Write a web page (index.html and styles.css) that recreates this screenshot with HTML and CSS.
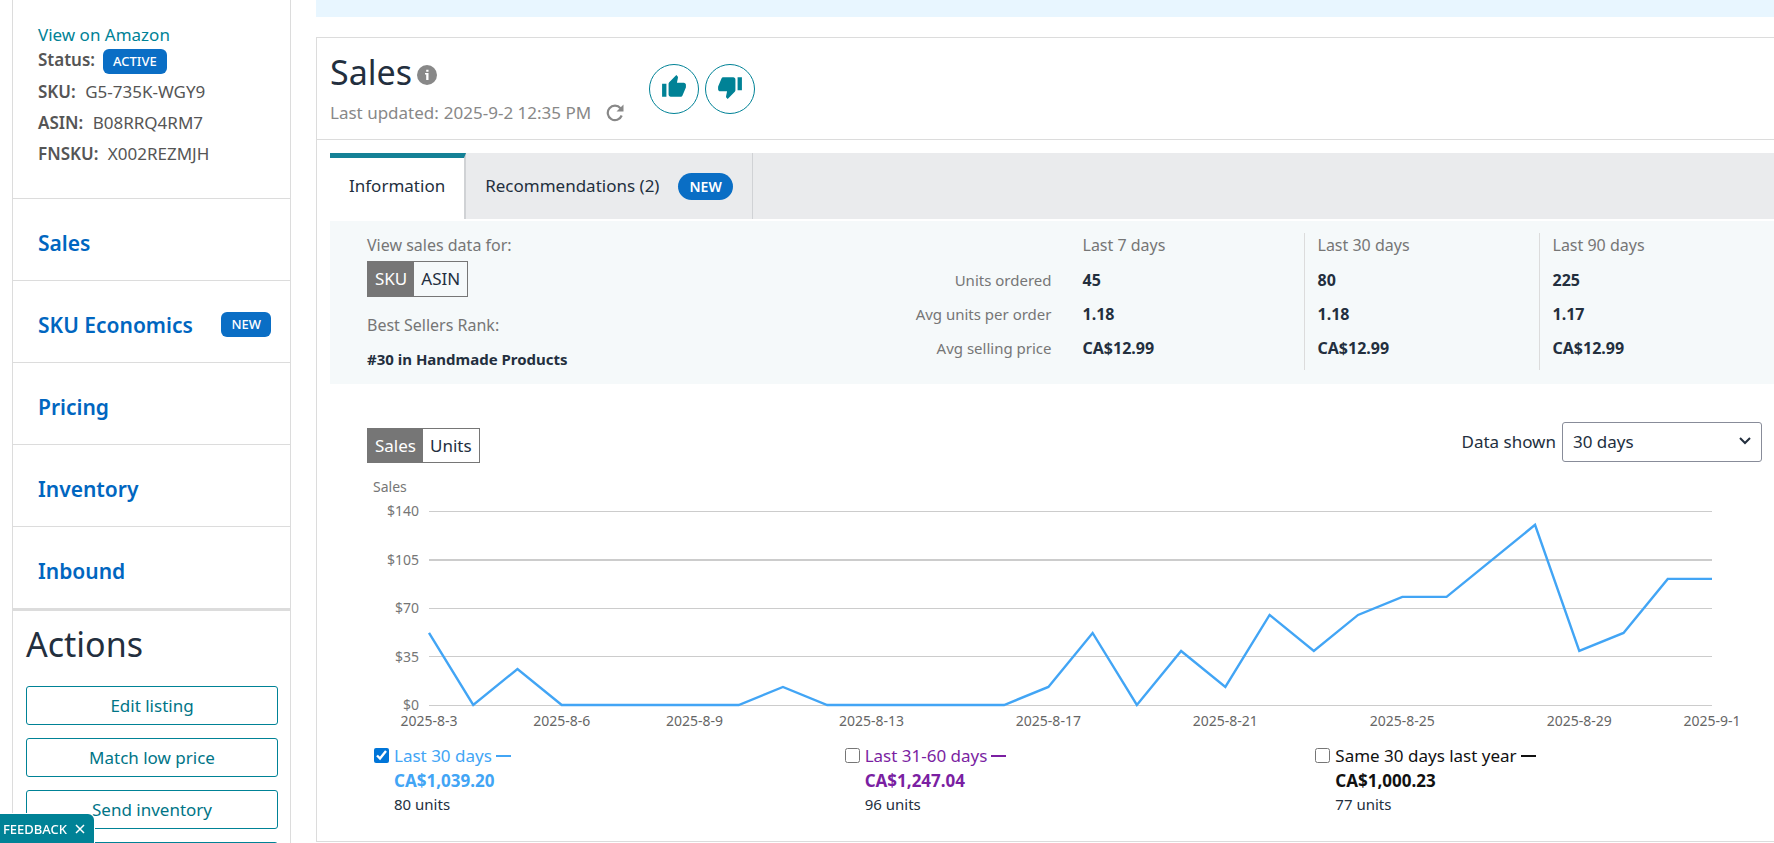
FILE: index.html
```html
<!DOCTYPE html>
<html lang="en">
  <head>
    <meta charset="UTF-8">
    <title>Sales</title>
    <link rel="stylesheet" href="styles.css">
  </head>
  <body>
    <aside class="sidebar">
      <div class="product">
        <a class="product-link" href="#">View on Amazon</a>
        <div class="product-status"><b>Status:</b> <span class="badge">ACTIVE</span></div>
        <div class="product-row"><b>SKU:</b> G5-735K-WGY9</div>
        <div class="product-row"><b>ASIN:</b> B08RRQ4RM7</div>
        <div class="product-row"><b>FNSKU:</b> X002REZMJH</div>
      </div>
      <nav class="menu">
        <a href="#">Sales</a>
        <a href="#">SKU Economics <span class="badge">NEW</span></a>
        <a href="#">Pricing</a>
        <a href="#">Inventory</a>
        <a href="#">Inbound</a>
      </nav>
      <div class="actions">
        <h2>Actions</h2>
        <button type="button">Edit listing</button>
        <button type="button">Match low price</button>
        <button type="button">Send inventory</button>
        <button type="button"></button>
      </div>
    </aside>

    <main class="main">
      <div class="notice"></div>
      <section class="panel">
        <header class="panel-header">
          <div>
            <h1>Sales
              <svg class="info" viewBox="0 0 20 20" width="20" height="20">
                <circle cx="10" cy="10" r="10" fill="#888"/>
                <path d="M8 8h3.500v7h-2.300v-5.500H8zM9.200 4.800h2.300v2H9.200z" fill="#fff"/>
              </svg>
            </h1>
            <p class="updated">Last updated: <span>2025-9-2 12:35 PM</span>
              <svg viewBox="0 0 18 18" width="18" height="18" fill="none" stroke="#888" stroke-width="2.200">
                <path d="M15.700 11.500A7.200 7.200 0 1 1 14.500 4.300"/>
                <path d="M17.500 0.500v7h-7z" fill="#888" stroke="none"/>
              </svg>
            </p>
          </div>
          <div class="votes">
            <button type="button" aria-label="Helpful">
              <svg viewBox="0 0 24 24" width="26" height="26"><path d="M1 21h4V9H1v12zm22-11c0-1.100-.9-2-2-2h-6.310l.95-4.570.03-.32c0-.41-.17-.79-.44-1.060L14.170 1 7.590 7.590C7.220 7.950 7 8.450 7 9v10c0 1.100.9 2 2 2h9c.83 0 1.540-.5 1.840-1.220l3.020-7.050c.09-.23.14-.47.14-.73v-2z"/></svg>
            </button>
            <button type="button" aria-label="Not helpful">
              <svg viewBox="0 0 24 24" width="26" height="26"><path d="M15 3H6c-.83 0-1.540.5-1.840 1.220l-3.020 7.050c-.09.23-.14.47-.14.73v2c0 1.100.9 2 2 2h6.310l-.95 4.570-.03.32c0 .41.17.79.44 1.060L9.830 23l6.590-6.590c.36-.36.58-.86.58-1.410V5c0-1.100-.9-2-2-2zm4 0v12h4V3h-4z"/></svg>
            </button>
          </div>
        </header>

        <div class="tabs">
          <button type="button" class="tab tab-active">Information</button>
          <button type="button" class="tab">Recommendations (2) <span class="pill">NEW</span></button>
        </div>

        <div class="summary">
          <div class="summary-left">
            <p>View sales data for:</p>
            <div class="toggle">
              <button type="button" class="on">SKU</button><button type="button">ASIN</button>
            </div>
            <p class="rank-label">Best Sellers Rank:</p>
            <p class="rank">#30 in Handmade Products</p>
          </div>
          <table class="stats">
            <thead>
              <tr><td></td><th>Last 7 days</th><th>Last 30 days</th><th>Last 90 days</th></tr>
            </thead>
            <tbody>
              <tr><th>Units ordered</th><td>45</td><td>80</td><td>225</td></tr>
              <tr><th>Avg units per order</th><td>1.18</td><td>1.18</td><td>1.17</td></tr>
              <tr><th>Avg selling price</th><td>CA$12.99</td><td>CA$12.99</td><td>CA$12.99</td></tr>
            </tbody>
          </table>
        </div>

        <div class="toolbar">
          <div class="toggle">
            <button type="button" class="on">Sales</button><button type="button">Units</button>
          </div>
          <div class="range">
            <label for="range">Data shown</label>
            <div class="select">
              <select id="range">
                <option>30 days</option>
              </select>
              <svg viewBox="0 0 12 8" width="12" height="8"><path d="M1 1l5 5 5-5" fill="none" stroke="#232f3e" stroke-width="2"/></svg>
            </div>
          </div>
        </div>

        <div class="chart">
          <div class="chart-title">Sales</div>
          <div class="chart-body">
            <div class="y-axis">
              <span>$140</span><span>$105</span><span>$70</span><span>$35</span><span>$0</span>
            </div>
            <div class="plot">
              <!-- one unit per day across, one unit per dollar down -->
              <svg viewBox="0 0 29 140" preserveAspectRatio="none">
                <g class="grid">
                  <path d="M0 0H29"/>
                  <path class="thick" d="M0 35H29"/>
                  <path d="M0 70H29"/>
                  <path d="M0 105H29"/>
                  <path d="M0 140H29"/>
                </g>
                <polyline class="line" stroke-width="2.400" points="0,88 1,140 2,114 3,140 4,140 5,140 6,140 7,140 8,127 9,140 10,140 11,140 12,140 13,140 14,127 15,88 16,140 17,101 18,127 19,75 20,101 21,75 22,62 23,62 24,36 25,10 26,101 27,88 28,49 29,49"/>
              </svg>
              <div class="x-axis">
                <span style="grid-column: 1">2025-8-3</span>
                <span style="grid-column: 4">2025-8-6</span>
                <span style="grid-column: 7">2025-8-9</span>
                <span style="grid-column: 11">2025-8-13</span>
                <span style="grid-column: 15">2025-8-17</span>
                <span style="grid-column: 19">2025-8-21</span>
                <span style="grid-column: 23">2025-8-25</span>
                <span style="grid-column: 27">2025-8-29</span>
                <span style="grid-column: 30">2025-9-1</span>
              </div>
            </div>
          </div>
        </div>

        <div class="legend">
          <div class="series series-current">
            <input type="checkbox" id="current" checked>
            <div>
              <label for="current">Last 30 days</label>
              <b>CA$1,039.20</b>
              <small>80 units</small>
            </div>
          </div>
          <div class="series series-previous">
            <input type="checkbox" id="previous">
            <div>
              <label for="previous">Last 31-60 days</label>
              <b>CA$1,247.04</b>
              <small>96 units</small>
            </div>
          </div>
          <div class="series series-year">
            <input type="checkbox" id="year">
            <div>
              <label for="year">Same 30 days last year</label>
              <b>CA$1,000.23</b>
              <small>77 units</small>
            </div>
          </div>
        </div>
      </section>
    </main>

    <button type="button" class="feedback">FEEDBACK
      <svg viewBox="0 0 10 10" width="10" height="10"><path d="M1 1l8 8M9 1l-8 8" stroke="#fff" stroke-width="1.500"/></svg>
    </button>
  </body>
</html>
```

FILE: styles.css
```css
:root {
  --ink: #232f3e;
  --teal: #008296;
  --blue: #0a6ec5;
  --grey: #767676;
  --border: #dcdcdc;
}
* {
  box-sizing: border-box;
}
body {
  margin: 0;
  height: 100vh;
  overflow: hidden;
  display: flex;
  align-items: flex-start;
  gap: 25px;
  padding-left: 12px;
  font-family: "Noto Sans", "Open Sans", sans-serif;
  font-size: 17px;
  line-height: 24px;
  color: var(--ink);
  background: #fff;
}
button, select {
  font: inherit;
  color: inherit;
}
h1, h2, p {
  margin: 0;
  font-weight: 400;
}
a {
  text-decoration: none;
}

/* Sidebar */
.sidebar {
  flex: none;
  width: 279px;
  border: solid var(--border);
  border-width: 0 1px;
}
.product {
  height: 199px;
  padding: 23px 25px 0;
  border-bottom: 1px solid var(--border);
  color: #555;
}
.product-link {
  display: block;
  color: var(--teal);
}
.product-status {
  display: flex;
  height: 29px;
  gap: 8px;
  line-height: 26px;
}
.product-status .badge {
  margin-top: 2px;
}
.product-row {
  line-height: 31px;
}
.product-row b {
  margin-right: 5px;
}
.product b {
  font-weight: 600;
}
.badge {
  height: 25px;
  padding: 0 10px;
  border-radius: 6px;
  background: var(--blue);
  color: #fff;
  font-size: 13px;
  font-weight: 500;
  line-height: 25px;
}
.menu a {
  display: flex;
  align-items: center;
  justify-content: space-between;
  height: 82px;
  padding: 6px 19px 0 25px;
  border-bottom: 1px solid var(--border);
  color: #0066c0;
  font-size: 21px;
  font-weight: 600;
}
.menu a:last-child {
  height: 84px;
  border-bottom-width: 3px;
}
.actions {
  display: flex;
  flex-direction: column;
  gap: 13px;
  padding: 13px 12px 0 13px;
}
.actions h2 {
  margin-bottom: 9px;
  font-size: 34px;
  line-height: 40px;
}
.actions button {
  height: 39px;
  border: 1px solid var(--teal);
  border-radius: 3px;
  background: #fff;
  color: #007587;
}

/* Main column */
.main {
  flex: 1;
  min-width: 0;
}
.notice {
  height: 17px;
  margin-bottom: 20px;
  background: #e8f6ff;
}
.panel {
  height: 805px;
  padding-left: 13px;
  border: solid var(--border);
  border-width: 1px 0 1px 1px;
}
.panel-header {
  display: flex;
  gap: 25px;
  height: 102px;
  margin-left: -13px;
  padding: 11px 13px 0;
  border-bottom: 1px solid var(--border);
}
.panel-header h1 {
  display: flex;
  align-items: center;
  gap: 5px;
  font-size: 34px;
  line-height: 46px;
}
.info {
  margin-top: 6px;
}
.updated {
  display: flex;
  align-items: center;
  gap: 5px;
  line-height: 36px;
  color: #888;
}
.updated svg {
  margin-left: 10px;
}
.votes {
  display: flex;
  gap: 6px;
  padding-top: 15px;
}
.votes button {
  width: 50px;
  height: 50px;
  padding: 0 0 4px;
  border: 1px solid var(--teal);
  border-radius: 50%;
  background: #fff;
}
.votes svg {
  display: block;
  margin: 0 auto;
  fill: var(--teal);
}

/* Tabs */
.tabs {
  display: flex;
  height: 66px;
  margin: 13px 0 2px;
  background: #eaebed;
}
.tab {
  display: flex;
  align-items: center;
  gap: 19px;
  padding: 0 19px;
  border: 0;
  border-right: 1px solid #d0d2d5;
  background: none;
}
.tab-active {
  border-top: 5px solid #148196;
  border-right-width: 2px;
  padding-bottom: 5px;
  background: #fff;
}
.pill {
  padding: 0 11px;
  border-radius: 14px;
  background: var(--blue);
  color: #fff;
  font-size: 14px;
  font-weight: 600;
  line-height: 27px;
}

/* Summary */
.summary {
  display: flex;
  justify-content: space-between;
  height: 163px;
  padding: 12px 0 0 37px;
  background: #f5f9fa;
  font-size: 16px;
  color: var(--grey);
}
.rank-label {
  margin-top: 16px;
}
.rank {
  margin-top: 10px;
  font-size: 15px;
  font-weight: 700;
  color: var(--ink);
}
.toggle {
  display: inline-flex;
  height: 36px;
  border: 1px solid var(--grey);
}
.summary .toggle {
  margin-top: 4px;
}
.toggle button {
  padding: 0 7px;
  border: 0;
  background: none;
  color: var(--ink);
  font-size: 17px;
}
.toggle .on {
  background: var(--grey);
  color: #fff;
}
.stats {
  width: 63%;
  align-self: flex-start;
  border-collapse: collapse;
  table-layout: fixed;
  white-space: nowrap;
}
.stats th, .stats td {
  width: 235px;
  padding: 0 0 0 13px;
  border-left: 1px solid var(--border);
  text-align: left;
  line-height: 34px;
}
.stats th {
  font-weight: 400;
}
.stats tbody th {
  font-size: 15px;
}
.stats td {
  font-weight: 700;
  color: var(--ink);
}
.stats thead th {
  line-height: 24px;
  padding-bottom: 6px;
}
.stats tr > :nth-child(1) {
  width: auto;
  padding-left: 0;
  padding-right: 17px;
  text-align: right;
}
.stats tr > :nth-child(-n+2) {
  border-left-color: transparent;
}
.stats tbody tr:last-child > * {
  padding-bottom: 5px;
}

/* Toolbar */
.toolbar {
  display: flex;
  justify-content: space-between;
  align-items: flex-end;
  margin-top: 38px;
  padding: 0 12px 0 37px;
}
.toolbar .toggle {
  height: 35px;
}
.range {
  display: flex;
  align-items: center;
  gap: 6px;
  margin-bottom: 1px;
}
.select {
  position: relative;
}
.select select {
  display: block;
  width: 200px;
  height: 40px;
  padding: 0 10px;
  border: 1px solid #888c99;
  border-radius: 3px;
  background: #fff;
  appearance: none;
}
.select svg {
  position: absolute;
  top: 15px;
  right: 11px;
}

/* Chart */
.chart {
  padding: 12px 62px 0 43px;
  font-size: 14px;
  color: var(--grey);
}
.chart-title {
  line-height: 24px;
}
.chart-body {
  display: flex;
  gap: 10px;
  margin-top: 12px;
}
.y-axis {
  display: flex;
  flex-direction: column;
  justify-content: space-between;
  width: 46px;
  height: 214px;
  margin-top: -10px;
  line-height: 20px;
  text-align: right;
}
.plot {
  flex: 1;
  min-width: 0;
}
.plot svg {
  display: block;
  width: 100%;
  height: 194px;
  overflow: visible;
}
.plot path, .plot polyline {
  fill: none;
  vector-effect: non-scaling-stroke;
}
.grid path {
  stroke: #ccc;
  stroke-width: 1px;
  shape-rendering: crispEdges;
}
.grid .thick {
  stroke-width: 2px;
}
.line {
  stroke: #42a5f5;
}
/* thirty day columns, widened so each centre sits on its point */
.x-axis {
  display: grid;
  grid-template-columns: repeat(30, minmax(0, 1fr));
  margin: 6px calc(100% / -58) 0;
  line-height: 20px;
  color: #666;
}
.x-axis span {
  justify-self: center;
  white-space: nowrap;
}

/* Legend */
.legend {
  display: grid;
  grid-template-columns: repeat(3, 1fr);
  margin: 12px -12px 0 44px;
}
.series {
  display: flex;
  gap: 5px;
}
.series input {
  width: 15px;
  height: 15px;
  margin: 5px 0 0;
  accent-color: #0075d8;
}
.series label, .series b, .series small {
  display: flex;
  align-items: center;
  gap: 4px;
  line-height: 25px;
}
.series label::after {
  content: "";
  width: 15px;
  height: 2px;
  background: currentColor;
}
.series small {
  font-size: 15px;
  line-height: 23px;
  color: var(--ink);
}
.series-current {
  color: #42a5f5;
}
.series-previous {
  color: #7b1fa2;
}
.series-year {
  color: #111;
}

.feedback {
  position: fixed;
  left: 0;
  bottom: 0;
  display: flex;
  align-items: center;
  gap: 8px;
  height: 29px;
  padding: 0 9px 0 3px;
  border: 0;
  border-radius: 0 6px 0 0;
  box-shadow: 0 0 0 1px #fff;
  background: var(--teal);
  color: #fff;
  font-size: 13px;
  font-weight: 500;
}
```
